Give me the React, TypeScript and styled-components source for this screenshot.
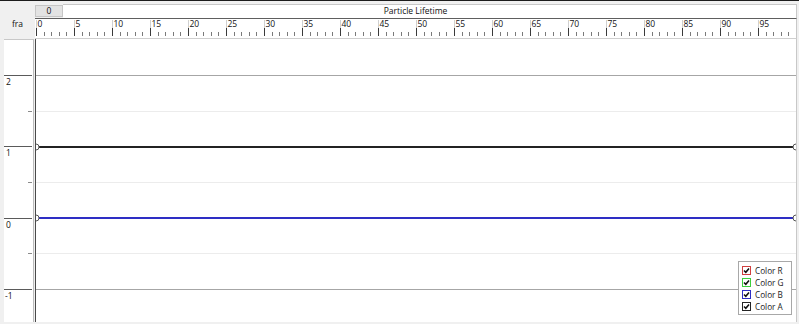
import React from "react"
import styled, { createGlobalStyle } from "styled-components"

const GlobalStyle = createGlobalStyle`
  html, body {
    margin: 0;
    padding: 0;
    background: #f0f0f0;
  }
  * {
    box-sizing: border-box;
  }
`

const PX_PER_UNIT = 7.6
const PLOT_W = 760
const PLOT_H = 283
// global y of value 2, step per unit
const Y_TOP_VALUE = 2
const Y_UNIT = 71.33
const PLOT_TOP = 39

const valueToY = (v: number, offset: number) =>
  75.5 - PLOT_TOP + (Y_TOP_VALUE - v) * Y_UNIT + offset

const curves = [
  { name: "Color R", color: "#d04040", value: null as number | null },
  { name: "Color G", color: "#3ccf3c", value: null as number | null },
  { name: "Color B", color: "#2e2ec4", value: 0 },
  { name: "Color A", color: "#232323", value: 1 },
]

const Frame = styled.div`
  width: 799px;
  height: 324px;
  background: #f0f0f0;
  border-top: 1px solid #1c1c1c;
  display: grid;
  grid-template-columns: 35px 762px 2px;
  grid-template-rows: 3px 14px 21px 283px 2px;
  font-family: "Open Sans", "Noto Sans", sans-serif;
  color: #111;
  overflow: hidden;
`

const HeaderBar = styled.div`
  grid-column: 2;
  grid-row: 2;
  display: flex;
`

const FrameBox = styled.div`
  width: 28px;
  height: 12px;
  margin-top: 1px;
  background: #e3e3e3;
  border: 1px solid #c6c6c6;
  font-size: 8.5px;
  line-height: 10px;
  text-align: center;
`

const Title = styled.div`
  flex: 1;
  background: #fff;
  border-top: 1px solid #c8c8c8;
  border-right: 1px solid #c8c8c8;
  font-size: 8.5px;
  line-height: 12px;
  text-align: center;
  padding-right: 28px;
`

const FrameLabel = styled.div`
  grid-column: 1;
  grid-row: 3;
  font-size: 8.5px;
  line-height: 10px;
  padding-left: 12px;
  padding-top: 1px;
`

const RulerBox = styled.div`
  grid-column: 2;
  grid-row: 3;
  background: #fff;
  border-top: 1px solid #5e5e5e;
  border-bottom: 1px solid #cfcfcf;
  border-right: 1px solid #c8c8c8;
  svg {
    display: block;
  }
`

const AxisPanel = styled.div`
  grid-column: 1;
  grid-row: 4;
  margin-left: 4px;
  margin-right: 1px;
  background: #fff;
  border-top: 1px solid #c8c8c8;
  border-right: 1px solid #bcbcbc;
  svg {
    display: block;
  }
`

const PlotBox = styled.div`
  grid-column: 2;
  grid-row: 4;
  position: relative;
  background: #fff;
  border-left: 1px solid #4a4a4a;
  border-right: 1px solid #c8c8c8;
  svg {
    display: block;
  }
`

const Legend = styled.div`
  position: absolute;
  right: 4px;
  bottom: 7px;
  width: 54px;
  padding: 2px 3px 2px 3px;
  background: #fff;
  border: 1px solid #a8a8a8;
  display: flex;
  flex-direction: column;
`

const LegendRow = styled.div`
  display: flex;
  align-items: center;
  gap: 4px;
  height: 12px;
  font-size: 8.2px;
  color: #222;
`

const CheckBox = styled.span<{ $color: string }>`
  width: 9px;
  height: 9px;
  border: 1px solid ${p => p.$color};
  background: #fff;
  display: flex;
  align-items: center;
  justify-content: center;
  svg {
    display: block;
  }
`

const Ruler = () => {
  const minor = Array.from({ length: 100 }, (_, i) => i)
  return (
    <svg width={761} height={19}>
      {minor.map(i => {
        const x = Math.round(1 + i * PX_PER_UNIT) + 0.5
        const major = i % 5 === 0
        return major ? (
          <g key={i}>
            <line x1={x} x2={x} y1={1} y2={9} stroke="#d0d0d0" />
            <line x1={x} x2={x} y1={9} y2={17} stroke="#3a3a3a" />
            <text
              x={x + 1}
              y={8}
              fontSize="8.5"
              fontFamily="Open Sans, sans-serif"
              fill="#111"
            >
              {i}
            </text>
          </g>
        ) : (
          <line key={i} x1={x} x2={x} y1={13} y2={17} stroke="#7a7a7a" />
        )
      })}
    </svg>
  )
}

const Axis = () => {
  const values = [2, 1, 0, -1]
  const halves = [1.5, 0.5, -0.5]
  return (
    <svg width={28} height={282}>
      {values.map(v => {
        const y = Math.round(valueToY(v, -1) - 0.5) + 0.5
        return (
          <g key={v}>
            <line x1={0} x2={28} y1={y} y2={y} stroke="#5a5a5a" />
            <text
              x={v < 0 ? 1 : 2}
              y={y + 9}
              fontSize="8.5"
              fontFamily="Open Sans, sans-serif"
              fill="#111"
            >
              {v}
            </text>
          </g>
        )
      })}
      {halves.map(v => {
        const y = Math.round(valueToY(v, -1) - 0.5) + 0.5
        return <line key={v} x1={24} x2={28} y1={y} y2={y} stroke="#8a8a8a" />
      })}
    </svg>
  )
}

const Plot = () => {
  const grid = [2, -1]
  const halves = [1.5, 0.5, -0.5]
  return (
    <svg width={PLOT_W} height={PLOT_H}>
      {halves.map(v => {
        const y = Math.round(valueToY(v, 0) - 0.5) + 0.5
        return (
          <line key={v} x1={0} x2={PLOT_W} y1={y} y2={y} stroke="#ececec" />
        )
      })}
      {grid.map(v => {
        const y = Math.round(valueToY(v, 0) - 0.5) + 0.5
        return (
          <line key={v} x1={0} x2={PLOT_W} y1={y} y2={y} stroke="#a6a6a6" />
        )
      })}
      {curves
        .filter(c => c.value !== null)
        .map(c => {
          const y = Math.round(valueToY(c.value as number, 0))
          return (
            <g key={c.name}>
              <line
                x1={0}
                x2={PLOT_W}
                y1={y}
                y2={y}
                stroke={c.color}
                strokeWidth={2}
              />
              <circle cx={0} cy={y} r={3} fill="#fff" stroke="#555" />
              <circle cx={PLOT_W} cy={y} r={3} fill="#fff" stroke="#555" />
            </g>
          )
        })}
    </svg>
  )
}

const Check = () => (
  <svg width={7} height={7} viewBox="0 0 7 7">
    <path d="M1 3.5 L2.8 5.3 L6 1.5" fill="none" stroke="#111" strokeWidth={1.6} />
  </svg>
)

const App = (): JSX.Element => {
  return (
    <>
      <GlobalStyle />
      <Frame>
        <HeaderBar>
          <FrameBox>0</FrameBox>
          <Title>Particle Lifetime</Title>
        </HeaderBar>
        <FrameLabel>fra</FrameLabel>
        <RulerBox>
          <Ruler />
        </RulerBox>
        <AxisPanel>
          <Axis />
        </AxisPanel>
        <PlotBox>
          <Plot />
          <Legend>
            {curves.map(c => (
              <LegendRow key={c.name}>
                <CheckBox $color={c.color}>
                  <Check />
                </CheckBox>
                {c.name}
              </LegendRow>
            ))}
          </Legend>
        </PlotBox>
      </Frame>
    </>
  )
}

export default App
